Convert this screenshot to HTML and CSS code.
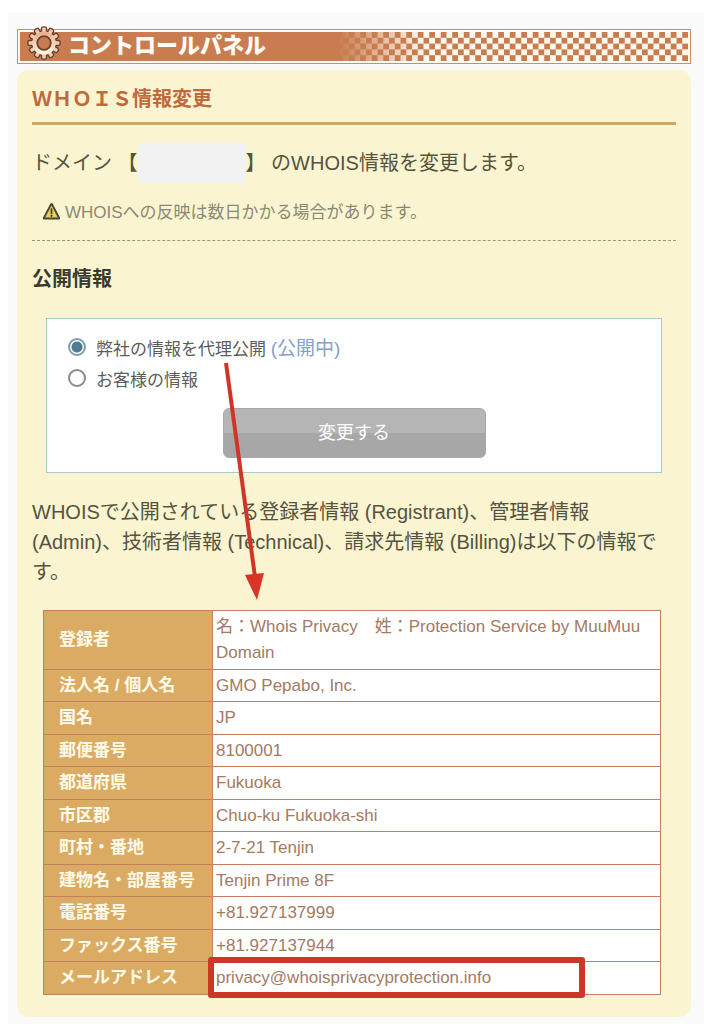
FILE: index.html
```html
<!DOCTYPE html>
<html lang="ja">
<head>
    <meta charset="UTF-8">
    <meta name="viewport" content="width=device-width, initial-scale=1.0">
    <title>コントロールパネル</title>
    <link rel="stylesheet" href="styles.css">
</head>
<body>
    <div class="wrapper">
        <header class="header">
            <div class="header-inner">
                <svg class="gear" viewBox="-17 -17 34 34" aria-hidden="true">
                    <defs>
                        <linearGradient id="gearFill" x1="0" y1="0" x2="0" y2="1">
                            <stop offset="0" stop-color="#e3ad8d"/>
                            <stop offset="1" stop-color="#fffbe2"/>
                        </linearGradient>
                        <g id="teeth">
                            <rect x="-1.8" y="-15.4" width="3.6" height="30.8" rx="1"/>
                            <rect x="-1.8" y="-15.4" width="3.6" height="30.8" rx="1" transform="rotate(30)"/>
                            <rect x="-1.8" y="-15.4" width="3.6" height="30.8" rx="1" transform="rotate(60)"/>
                            <rect x="-1.8" y="-15.4" width="3.6" height="30.8" rx="1" transform="rotate(90)"/>
                            <rect x="-1.8" y="-15.4" width="3.6" height="30.8" rx="1" transform="rotate(120)"/>
                            <rect x="-1.8" y="-15.4" width="3.6" height="30.8" rx="1" transform="rotate(150)"/>
                            <circle r="11.6"/>
                        </g>
                    </defs>
                    <use href="#teeth" fill="#704030" stroke="#704030" stroke-width="2.8"/>
                    <use href="#teeth" fill="#f0cdb2"/>
                    <circle r="11.6" fill="url(#gearFill)"/>
                    <circle r="6.8" fill="#c97c50" stroke="#704030" stroke-width="1.8"/>
                </svg>
                <h1>コントロールパネル</h1>
                <svg class="checker" viewBox="0 0 350 29" aria-hidden="true">
                    <defs>
                        <pattern id="checks" x="350" y="0" width="11.5" height="11.6" patternUnits="userSpaceOnUse">
                            <rect width="5.75" height="5.8" fill="#fffaf0"/>
                            <rect x="5.75" y="5.8" width="5.75" height="5.8" fill="#fffaf0"/>
                        </pattern>
                        <linearGradient id="fade">
                            <stop offset="0" stop-color="#c97c50"/>
                            <stop offset="0.25" stop-color="#c97c50" stop-opacity="0"/>
                        </linearGradient>
                    </defs>
                    <rect width="350" height="29" fill="url(#checks)"/>
                    <rect width="350" height="29" fill="url(#fade)"/>
                </svg>
            </div>
        </header>

        <main class="panel">
            <h2>ＷＨＯＩＳ情報変更</h2>
            <p class="domain">ドメイン 【<span class="domain-name"></span>】 のWHOIS情報を変更します。</p>
            <p class="note">
                <svg class="warning" viewBox="0 0 20 20" aria-hidden="true">
                    <path d="M10 2.6 L17.6 17 H2.4 Z" fill="#f0cf58" stroke="#484636" stroke-width="3" stroke-linejoin="round"/>
                    <path d="M10 3.6 L16.6 16.4 H3.4 Z" fill="#eccb5c"/>
                    <path d="M10 7.5 V12" stroke="#40402f" stroke-width="1.8" stroke-linecap="round"/>
                    <circle cx="10" cy="14.6" r="1.1" fill="#40402f"/>
                </svg>
                WHOISへの反映は数日かかる場合があります。
            </p>

            <h3>公開情報</h3>
            <form class="publish">
                <div class="choice">
                    <input type="radio" name="publish" id="proxy" checked>
                    <label for="proxy">弊社の情報を代理公開 <span class="status">(公開中)</span></label>
                </div>
                <div class="choice">
                    <input type="radio" name="publish" id="customer">
                    <label for="customer">お客様の情報</label>
                </div>
                <button type="button" class="change-btn">変更する</button>
            </form>

            <p class="description">WHOISで公開されている登録者情報 (Registrant)、管理者情報 (Admin)、技術者情報 (Technical)、請求先情報 (Billing)は以下の情報です。</p>

            <table class="whois">
                <tbody>
                    <tr><th scope="row">登録者</th><td>名：Whois Privacy　姓：Protection Service by MuuMuu Domain</td></tr>
                    <tr><th scope="row">法人名 / 個人名</th><td>GMO Pepabo, Inc.</td></tr>
                    <tr><th scope="row">国名</th><td>JP</td></tr>
                    <tr><th scope="row">郵便番号</th><td>8100001</td></tr>
                    <tr><th scope="row">都道府県</th><td>Fukuoka</td></tr>
                    <tr><th scope="row">市区郡</th><td>Chuo-ku Fukuoka-shi</td></tr>
                    <tr><th scope="row">町村・番地</th><td>2-7-21 Tenjin</td></tr>
                    <tr><th scope="row">建物名・部屋番号</th><td>Tenjin Prime 8F</td></tr>
                    <tr><th scope="row">電話番号</th><td>+81.927137999</td></tr>
                    <tr><th scope="row">ファックス番号</th><td>+81.927137944</td></tr>
                    <tr><th scope="row">メールアドレス</th><td class="marked">privacy@whoisprivacyprotection.info</td></tr>
                </tbody>
            </table>

            <svg class="arrow" viewBox="0 0 42 240" aria-hidden="true">
                <path d="M5 1 L34 215" stroke="#d03628" stroke-width="4"/>
                <path d="M24 213 L43 211 L36 238 Z" fill="#d93426"/>
            </svg>
        </main>
    </div>
</body>
</html>
```
FILE: styles.css
```css
*, *::after { margin: 0; padding: 0; box-sizing: border-box; }
body { font-family: "Liberation Sans", "Noto Sans CJK JP", sans-serif; font-size: 20px; line-height: 30px; color: #55533f; background: #fff; padding: 12px 0 0 8px; }
.wrapper { background: #fafafb; padding: 17px 13px 7px 9px; }

.header { border: 1px solid #c98e70; background: #fffaf0; padding: 2px; margin-bottom: 6px; }
.header-inner { display: flex; align-items: flex-start; height: 29px; background: #c97c50; }
.gear { width: 34px; height: 34px; margin: -6px 7px 0; flex: none; }
.header h1 { font-size: 22px; line-height: 28px; font-weight: 900; color: #fffdf5; white-space: nowrap; }
.checker { width: 350px; height: 29px; margin-left: auto; }

.panel { position: relative; background: #faf5d0; border-radius: 12px; padding: 14px 15px 22px; }
.panel h2 { font-size: 20px; color: #c0693c; padding-bottom: 8px; border-bottom: 3px solid #cfa868; }
.domain { line-height: 40px; margin-top: 18px; }
.domain-name { display: inline-block; width: 108px; height: 40px; vertical-align: top; background: #f2f2f3; border-radius: 3px; }
.note { display: flex; align-items: center; gap: 4px; margin-top: 15px; padding: 0 0 12px 10px; font-size: 17px; color: #8b8975; border-bottom: 1px dashed #9d987a; }
.warning { width: 19px; height: 19px; margin-bottom: 3px; flex: none; }
.panel h3 { font-size: 20px; color: #3a3a30; margin: 23px 0 24px; }

.publish { margin: 0 14px; padding: 15px 21px 14px; background: #fff; border: 1px solid #a9cbc8; font-size: 17px; color: #5c5c5c; }
.choice { display: flex; align-items: center; gap: 10px; margin-bottom: 1px; }
.choice input { appearance: none; width: 18px; height: 18px; margin-bottom: 6px; border: 2px solid #8a8a8a; border-radius: 50%; background: #fff; }
.choice input:checked { border-color: #7d9bab; background: radial-gradient(circle, #4f7b93 5px, #fff 6px); }
.status { font-size: 19px; color: #86a0cc; }
.change-btn { display: block; width: 263px; height: 50px; margin: 12px auto 0; padding-bottom: 4px; border: 1px solid #a8a8a8; border-radius: 6px; background: linear-gradient(#b5b5b5 50%, #a7a7a7 50%); color: #fff; font-family: inherit; font-size: 18px; cursor: pointer; }

.description { margin: 24px 0 23px; }

.whois { width: calc(100% - 26px); margin-left: 11px; border-collapse: collapse; font-size: 17px; line-height: 26px; background: #fff; color: #a47a64; }
.whois th, .whois td { border: 1px solid #c47f5c; padding: 3px; text-align: left; }
.whois th { width: 169px; padding-left: 15px; background: #dbab63; color: #fffbea; white-space: nowrap; }
.whois tr:nth-child(even) th, .whois tr:nth-child(even) td { padding-bottom: 2px; }

/* callouts */
.marked { position: relative; }
.marked::after { content: ""; position: absolute; left: -5px; top: -5px; width: 377px; height: 41px; border: 6px solid #d03628; border-radius: 3px; }
.arrow { position: absolute; left: 204px; top: 292px; width: 42px; height: 240px; overflow: visible; pointer-events: none; }
```
